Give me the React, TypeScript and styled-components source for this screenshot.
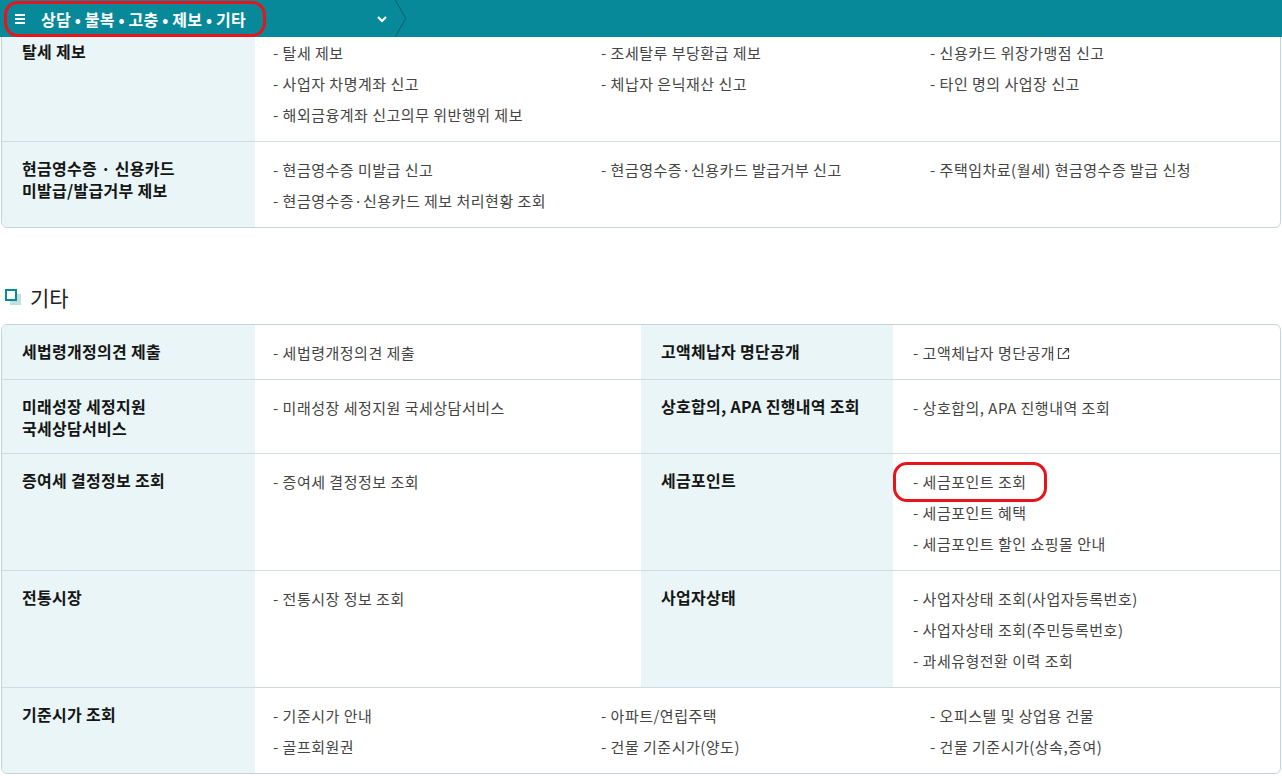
import React from 'react';
import styled, { createGlobalStyle } from 'styled-components';

const GlobalStyle = createGlobalStyle`
	html, body {
		margin: 0;
		padding: 0;
		overflow: hidden;
		background: #fff;
	}
	body {
		font-family: 'Noto Sans CJK KR', 'Noto Sans', sans-serif;
		color: #222;
	}
	ul {
		margin: 0;
		padding: 0;
		list-style: none;
	}
`;

type Pair = { title: string[]; items: string[]; external?: boolean; marked?: number };

const reportRows = [
	{
		title: ['탈세 제보'],
		items: [
			'탈세 제보',
			'조세탈루 부당환급 제보',
			'신용카드 위장가맹점 신고',
			'사업자 차명계좌 신고',
			'체납자 은닉재산 신고',
			'타인 명의 사업장 신고',
			'해외금융계좌 신고의무 위반행위 제보',
		],
	},
	{
		title: ['현금영수증 · 신용카드', '미발급/발급거부 제보'],
		items: [
			'현금영수증 미발급 신고',
			'현금영수증·신용카드 발급거부 신고',
			'주택임차료(월세) 현금영수증 발급 신청',
			'현금영수증·신용카드 제보 처리현황 조회',
		],
	},
];

const etcRows: Pair[][] = [
	[
		{ title: ['세법령개정의견 제출'], items: ['세법령개정의견 제출'] },
		{ title: ['고액체납자 명단공개'], items: ['고액체납자 명단공개'], external: true },
	],
	[
		{ title: ['미래성장 세정지원', '국세상담서비스'], items: ['미래성장 세정지원 국세상담서비스'] },
		{ title: ['상호합의, APA 진행내역 조회'], items: ['상호합의, APA 진행내역 조회'] },
	],
	[
		{ title: ['증여세 결정정보 조회'], items: ['증여세 결정정보 조회'] },
		{
			title: ['세금포인트'],
			items: ['세금포인트 조회', '세금포인트 혜택', '세금포인트 할인 쇼핑몰 안내'],
			marked: 0,
		},
	],
	[
		{ title: ['전통시장'], items: ['전통시장 정보 조회'] },
		{
			title: ['사업자상태'],
			items: ['사업자상태 조회(사업자등록번호)', '사업자상태 조회(주민등록번호)', '과세유형전환 이력 조회'],
		},
	],
];

const priceRow = {
	title: ['기준시가 조회'],
	items: [
		'기준시가 안내',
		'아파트/연립주택',
		'오피스텔 및 상업용 건물',
		'골프회원권',
		'건물 기준시가(양도)',
		'건물 기준시가(상속,증여)',
	],
};

const Title = ({ lines }: { lines: string[] }) => (
	<>
		{lines.map((line, idx) => (
			<div key={idx}>{line}</div>
		))}
	</>
);

export const App = () => {
	return (
		<>
			<GlobalStyle />
			<TopBar>
				<MenuSegment>
					<Burger>
						<span />
						<span />
						<span />
					</Burger>
					<MenuTitle>상담 • 불복 • 고충 • 제보 • 기타</MenuTitle>
					<svg width="12" height="8" viewBox="0 0 12 8">
						<path d="M2 2 L6 6 L10 2" fill="none" stroke="#fff" strokeWidth="2.2" />
					</svg>
					<Mark $w={262} $h={36} $top={1} $left={4} />
				</MenuSegment>
				<Divider width="16" height="38" viewBox="0 0 16 38">
					<path d="M2 0 L13 19 L2 38" fill="none" stroke="#04606b" strokeWidth="1" />
				</Divider>
			</TopBar>

			<Page>
				<Table>
					{reportRows.map(({ title, items }, idx) => (
						<Row key={idx} $cols="253px 1fr">
							<HeadCell $pad={20}>
								<Title lines={title} />
							</HeadCell>
							<ThreeCol>
								{items.map((item) => (
									<Item key={item}>- {item}</Item>
								))}
							</ThreeCol>
						</Row>
					))}
				</Table>

				<Heading>
					<HeadingIcon />
					기타
				</Heading>

				<Table>
					{etcRows.map((pairs, idx) => (
						<Row key={idx} $cols="253px 386px 252px 1fr">
							{pairs.map(({ title, items, external, marked }, pIdx) => (
								<React.Fragment key={pIdx}>
									<HeadCell $pad={20}>
										<Title lines={title} />
									</HeadCell>
									<BodyCell $pad={pIdx === 0 ? 18 : 20}>
										{items.map((item, iIdx) => (
											<Item key={item}>
												- {item}
												{external && <ExternalIcon />}
												{marked === iIdx && <Mark $w={154} $h={40} $top={-4} $left={-20} />}
											</Item>
										))}
									</BodyCell>
								</React.Fragment>
							))}
						</Row>
					))}
					<Row $cols="253px 1fr">
						<HeadCell $pad={20}>
							<Title lines={priceRow.title} />
						</HeadCell>
						<ThreeCol>
							{priceRow.items.map((item) => (
								<Item key={item}>- {item}</Item>
							))}
						</ThreeCol>
					</Row>
				</Table>
			</Page>
		</>
	);
};

const ExternalIcon = () => (
	<ExtSvg width="13" height="13" viewBox="0 0 13 13">
		<path d="M5 1.5 H1.5 V11.5 H11.5 V8" fill="none" stroke="#444" strokeWidth="1.2" />
		<path d="M7.5 1.5 H11.5 V5.5 M11.5 1.5 L5.5 7.5" fill="none" stroke="#444" strokeWidth="1.2" />
	</ExtSvg>
);

export default App;

const TopBar = styled.header`
	position: fixed;
	top: 0;
	left: 0;
	right: 0;
	height: 37px;
	background: #07899a;
	display: flex;
	align-items: center;
	z-index: 10;
`;

const MenuSegment = styled.div`
	position: relative;
	display: flex;
	align-items: center;
	width: 393px;
	height: 100%;
	padding: 0 5px 0 15px;
	box-sizing: border-box;

	svg {
		margin-left: auto;
		margin-top: 1px;
	}
`;

const Divider = styled.svg`
	display: block;
	align-self: stretch;
	height: 37px;
`;

const Burger = styled.div`
	display: flex;
	flex-direction: column;
	gap: 2px;
	width: 10px;
	margin-right: 16px;

	span {
		display: block;
		height: 2px;
		background: #fff;
	}
`;

const MenuTitle = styled.span`
	color: #fff;
	font-size: 16px;
	font-weight: 700;
	letter-spacing: 0.2px;
`;

const Mark = styled.span<{ $w: number; $h: number; $top: number; $left: number }>`
	position: absolute;
	top: ${(p) => p.$top}px;
	left: ${(p) => p.$left}px;
	width: ${(p) => p.$w}px;
	height: ${(p) => p.$h}px;
	border: 3px solid #e8141b;
	border-radius: 14px;
	box-sizing: border-box;
	pointer-events: none;
`;

const Page = styled.main`
	padding: 24px 1px 0 1px;
`;

const Table = styled.section`
	border: 1px solid #c3d3d6;
	border-radius: 6px;
	overflow: hidden;
	background: #fff;
`;

const Row = styled.div<{ $cols: string }>`
	display: grid;
	grid-template-columns: ${(p) => p.$cols};

	& + & {
		border-top: 1px solid #cfdcdf;
	}
`;

const HeadCell = styled.div<{ $pad: number }>`
	background: #e9f5f6;
	padding: 15px 0 14px ${(p) => p.$pad}px;
	font-size: 16px;
	font-weight: 700;
	line-height: 22px;
	color: #151515;
	letter-spacing: 0.3px;
`;

const BodyCell = styled.ul<{ $pad: number }>`
	padding: 12px 0 11px ${(p) => p.$pad}px;
`;

const ThreeCol = styled.ul`
	display: grid;
	grid-template-columns: 328px 329px 1fr;
	padding: 12px 0 11px 18px;
`;

const Item = styled.li`
	position: relative;
	font-size: 15px;
	line-height: 31px;
	color: #444;
	letter-spacing: 0.5px;
	white-space: nowrap;
`;

const ExtSvg = styled.svg`
	margin-left: 2px;
	vertical-align: -1px;
`;

const Heading = styled.h2`
	display: flex;
	align-items: center;
	gap: 9px;
	margin: 55px 0 13px 4px;
	font-size: 21px;
	font-weight: 400;
	line-height: 28px;
	color: #222;
`;

const HeadingIcon = styled.span`
	position: relative;
	width: 16px;
	height: 16px;

	&::before {
		content: '';
		position: absolute;
		left: 5px;
		top: 5px;
		width: 11px;
		height: 11px;
		background: #bfe0dd;
	}

	&::after {
		content: '';
		position: absolute;
		left: 0;
		top: 0;
		width: 8px;
		height: 8px;
		border: 2px solid #07899a;
		background: #fff;
	}
`;
